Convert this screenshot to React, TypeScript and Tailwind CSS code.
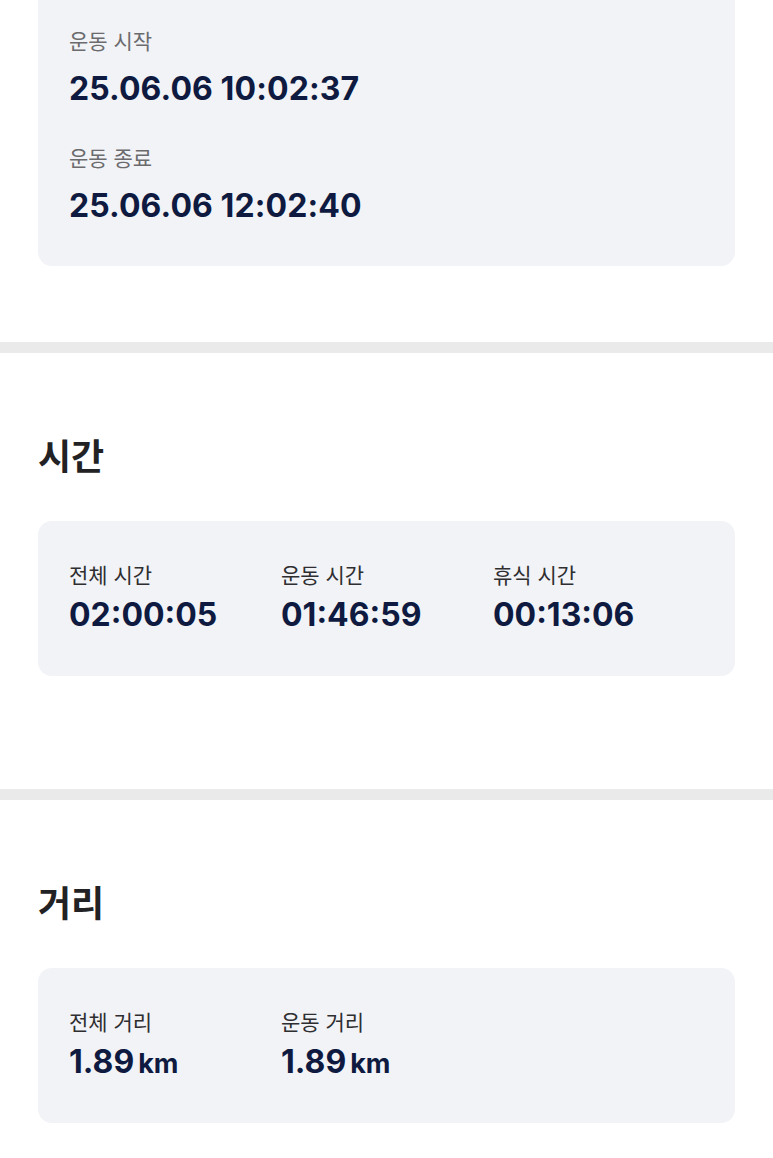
import React from "react";

const font = "font-['Inter','Noto_Sans_CJK_KR',sans-serif]";

function Label({ children, muted }: { children: React.ReactNode; muted?: boolean }) {
  return (
    <div className={`text-[21px] leading-[28px] ${muted ? "text-[#6b6b6e]" : "text-[#2e2e30]"}`}>
      {children}
    </div>
  );
}

function Value({ children }: { children: React.ReactNode }) {
  return (
    <div className="text-[32px] leading-[40px] font-bold text-[#0f1a40] tracking-[0.1px]">
      {children}
    </div>
  );
}

function Stat({ label, value, unit }: { label: string; value: string; unit?: string }) {
  return (
    <div className="w-[212px] flex flex-col gap-[5px]">
      <Label>{label}</Label>
      <div className="h-[40px] flex items-baseline text-[#0f1a40] font-bold leading-[40px]">
        <span className="text-[32px] leading-[40px]">{value}</span>
        {unit && <span className="ml-[4px] text-[27px] leading-none">{unit}</span>}
      </div>
    </div>
  );
}

function Section({ title, children, last }: { title: string; children: React.ReactNode; last?: boolean }) {
  return (
    <section className={`px-[38px] pt-[82px] ${last ? "pb-[35px]" : "pb-[113px]"}`}>
      <h2 className="text-[36px] leading-[44px] font-bold text-[#222224]">{title}</h2>
      <div className="mt-[42px] h-[155px] bg-[#f2f3f7] rounded-[14px] pl-[31px] pt-[41px] flex">
        {children}
      </div>
    </section>
  );
}

export default function App() {
  return (
    <div className={`w-[773px] min-h-[1158px] bg-white ${font}`}>
      <div className="px-[38px] pb-[76px]">
        <div className="bg-[#f2f3f7] rounded-b-[14px] pl-[31px] pt-[28px] pb-[40px]">
          <Label muted>운동 시작</Label>
          <div className="mt-[13px]">
            <Value>25.06.06 10:02:37</Value>
          </div>
          <div className="mt-[36px]">
            <Label muted>운동 종료</Label>
          </div>
          <div className="mt-[13px]">
            <Value>25.06.06 12:02:40</Value>
          </div>
        </div>
      </div>
      <div className="h-[11px] bg-[#eaeaea]" />
      <Section title="시간">
        <Stat label="전체 시간" value="02:00:05" />
        <Stat label="운동 시간" value="01:46:59" />
        <Stat label="휴식 시간" value="00:13:06" />
      </Section>
      <div className="h-[11px] bg-[#eaeaea]" />
      <Section title="거리" last>
        <Stat label="전체 거리" value="1.89" unit="km" />
        <Stat label="운동 거리" value="1.89" unit="km" />
      </Section>
    </div>
  );
}
